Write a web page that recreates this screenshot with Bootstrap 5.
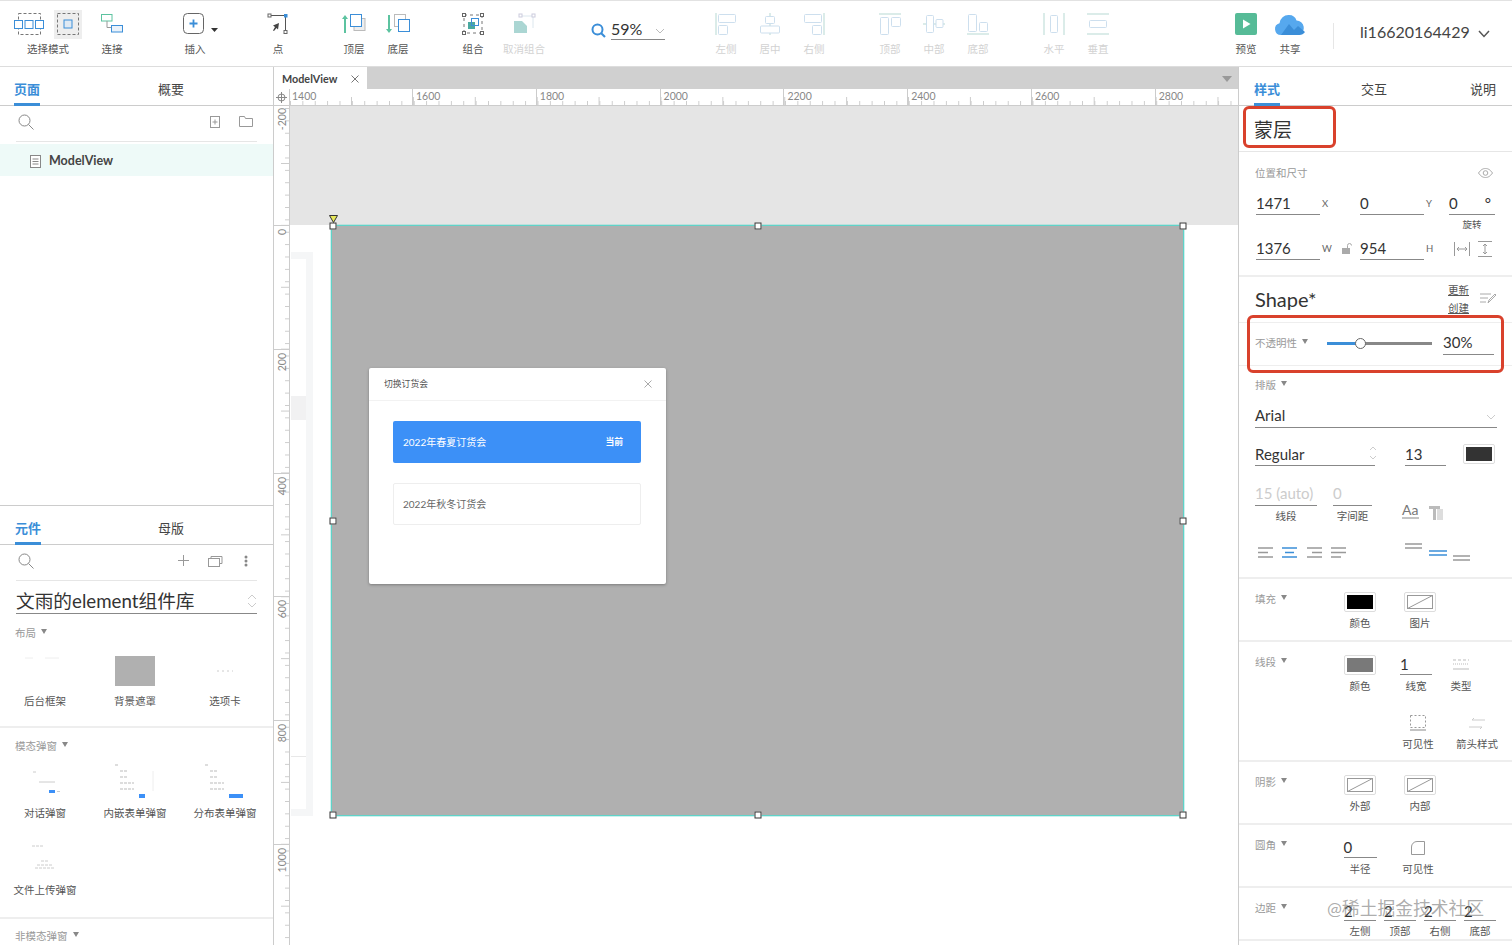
<!DOCTYPE html>
<html lang="zh-CN">
<head>
<meta charset="utf-8">
<title>Axure</title>
<link rel="stylesheet" href="https://cdn.jsdelivr.net/npm/bootstrap@5.3.0/dist/css/bootstrap.min.css">
<style>
html,body{height:945px;overflow:hidden}
body{font-family:"Lato","Noto Sans CJK SC",sans-serif;font-size:11px;color:#444;background:#fff}
svg{display:block;overflow:visible}
/* toolbar */
.topbar{height:67px;border-top:1px solid #e2e2e2;border-bottom:1px solid #ddd;padding-left:14px}
.tool{width:44px;height:65px;display:flex;flex-direction:column;align-items:center}
.tool-ic{height:30px;margin-top:8px;display:flex;align-items:center;justify-content:center}
.tool-tx{font-size:10.5px;line-height:14px;margin-top:3px;color:#555;white-space:nowrap}
.tool.off .tool-tx{color:#d2d2d2}
.tw68{width:68px}.tw58{width:58px}
.m8{margin-left:8px}.m39{margin-left:39px}.m32{margin-left:32px}.m31{margin-left:31px}.m37{margin-left:37px}.m38{margin-left:38px}.m104{margin-left:104px}
.selbox{width:29px;height:29px;background:#eee;margin-left:10px}
.zoombox{width:76px;height:30px;margin-top:14px}
.zoomfld{width:54px;border-bottom:1px solid #888;height:25px;font-size:16px;line-height:28px;color:#333;margin-left:4px;position:relative}
.zoomfld .chev{top:13px;right:0}
.vsep{width:1px;height:26px;background:#e6e6e6;margin:22px 0 0 21px}
.user{font-size:16px;color:#444;margin-left:26px;margin-top:19px;line-height:24px;height:24px}
/* panels */
.mainrow{height:878px}
.leftp{width:274px;border-right:1px solid #ccc;flex:none}
.rightp{width:274px;border-left:1px solid #ccc;flex:none;position:relative;overflow:hidden}
.tabsr{height:39px;border-bottom:1px solid #ccc;position:relative;font-size:13px;color:#444}
.tb{position:absolute;top:13px;line-height:18px}
.tb.on{color:#3b8ed8;font-weight:700}
.tb.on::after{content:"";position:absolute;left:0;right:0;top:23px;height:3px;background:#3b8ed8}
.t14{left:14px}.t158{left:158px}.t15{left:15px}.t158b{left:158px}
.r15{left:15px}.r122{left:122px}.r231{left:231px}
.ltop{height:439px;border-bottom:1px solid #ccc}
.srow{height:36px;margin:0 16px;border-bottom:1px solid #e6e6e6;padding:0 2px 4px}
.srch{margin-right:auto}
.gap-f{margin-left:19px}
.gap-d{margin-left:21px;margin-right:7px}
.folder{margin-left:19px;margin-right:2px}
.tree{height:32px;margin-top:2px;background:#eefaf8;padding:2px 0 0 30px;font-size:12.5px;font-weight:700;color:#444}
.libsel{height:33px;margin:0 16px;border-bottom:1px solid #888;font-size:18.7px;color:#333;white-space:nowrap;padding-top:8px}
.glabel{font-size:10.5px;color:#999;height:20px;line-height:20px;display:flex;align-items:center;gap:5px;white-space:nowrap}
.tri{width:0;height:0;border-left:3px solid transparent;border-right:3px solid transparent;border-top:5px solid #888;display:inline-block;margin-top:-3px}
.lsec{padding-left:15px}
.thgrid{display:grid;grid-template-columns:repeat(3,90px)}
.thc{display:flex;flex-direction:column;align-items:center}
.thp{height:32px;display:flex;align-items:center;justify-content:center}
.thp2{height:36px;display:flex;align-items:center;justify-content:center}
.thl{font-size:10.5px;line-height:16px;margin-top:6px;color:#555;white-space:nowrap}
.veil{width:40px;height:30px;background:#b0b0b0}
.sec1{height:114px;border-bottom:2px solid #eee;padding-top:9px}
.sec2{height:191px;border-bottom:2px solid #eee;padding-top:8px}
.thg1{margin-top:12px}
.thg2{margin-top:7px}
.thg3{margin-top:19px}
.lsecl{padding-top:7px}
/* centre */
.center{min-width:0;flex:1 1 auto}
.tabbar{height:22px;background:#d0d0d0;position:relative}
.dtab{width:93px;height:22px;background:#fff;font-size:10.8px;font-weight:700;color:#444;padding:1px 0 0 8px;line-height:22px;display:flex;align-items:center;gap:14px}
.darrow{position:absolute;right:6px;top:9px;border-left:5px solid transparent;border-right:5px solid transparent;border-top:6px solid #999}
.hruler{height:17px;border-bottom:1px solid #ccc;background-color:#fff;
 background-image:linear-gradient(90deg,#ccc 1px,transparent 1px),linear-gradient(90deg,#ccc 1px,transparent 1px);
 background-size:12.38px 4px,61.9px 8px;background-repeat:repeat-x;
 background-position:0 100%,61px 100%}
.rcorner{width:16px;flex:none;background:#fff;display:flex;align-items:center;justify-content:center;border-right:1px solid #ccc;border-bottom:1px solid #ccc;height:17px}
.rcell{width:123.8px;flex:none;font-size:10.5px;color:#888;padding-left:3px;line-height:15px;border-left:1px solid #ccc;height:16px}
.rcell0{width:122px;flex:none;font-size:10.5px;color:#888;padding-left:2px;line-height:15px;height:16px}
.work{height:839px}
.vruler{width:16px;flex:none;border-right:1px solid #ccc;background-color:#fff;
 background-image:linear-gradient(#ccc 1px,transparent 1px),linear-gradient(#ccc 1px,transparent 1px);
 background-size:4px 12.38px,8px 61.9px;background-repeat:repeat-y;background-position:100% 2px,100% 57px;overflow:hidden}
.vcell{height:123.8px;border-top:1px solid #ccc;padding-top:3px;font-size:10.5px;color:#888;line-height:12px}
.vcell0{height:119px;padding-top:2px;font-size:10.5px;color:#888;line-height:12px}
.vtx{writing-mode:vertical-rl;transform:rotate(180deg);display:block;height:max-content;margin-left:2px}
.canvas{position:relative;overflow:hidden;background:#fff}
.band{position:absolute;left:0;right:0;top:0;height:119px;background:#e5e5e5}
.gh1{position:absolute;left:1px;top:146px;width:22px;height:564px;border:solid #f5f6f7;border-width:7px 7px 7px 0}
.gh2{position:absolute;left:1px;top:290px;width:15px;height:24px;background:#f1f1f2}
.gh3{position:absolute;left:1px;top:650px;width:15px;height:1px;background:#e8e8e8}
.mask{position:absolute;left:41px;top:119px;width:853px;height:591px;background:#b0b0b0;border:1px solid #5fd3c9;box-shadow:0 0 0 1px rgba(111,214,204,.35)}
.hd{position:absolute;width:7px;height:7px;background:#fff;border:1px solid #333;transform:translate(-50%,-50%)}
.hl{left:1px}.hc{left:50%}.hr{left:100%}
.ht{top:0}.hm{top:50%}.hb{top:100%}
.ytri{position:absolute;left:-3px;top:-11px}
.dlg{position:absolute;left:37px;top:142px;width:297px;height:216px;background:#fff;border-radius:2px;box-shadow:0 1px 3px rgba(0,0,0,.3)}
.dlghead{height:33px;padding:0 14px 0 15px;border-bottom:1px solid #f2f2f2;font-size:8.8px;color:#555}
.dlgbody{padding:20px 25px 0 24px}
.opt{height:42px;border-radius:2px;padding:0 18px 0 10px;font-size:10px}
.opton{background:#3c90f7;color:#fff;margin-bottom:20px}
.tagcur{font-size:8.8px;font-weight:700}
.optoff{border:1px solid #eee;color:#666;padding-left:9px}
/* right */
.rtabs{height:39px}
.namesec{height:46px;border-bottom:1px solid #e6e6e6;padding-left:15px;font-size:19px;line-height:47px;color:#333}
.geo{height:125px;border-bottom:2px solid #eee;padding:11px 0 0 16px}
.geoh{height:20px;width:238px;font-size:10.5px;color:#999;line-height:20px}
.geog{display:grid;grid-template-columns:64px 40px 64px 25px 46px;margin:9px 0 0 1px;row-gap:0}
.fld{height:23px;border-bottom:1px solid #888;font-size:15px;line-height:21px;color:#333;position:relative;white-space:nowrap}
.geog .fld,.rowa .fld{line-height:23px}
.unit{font-size:9.5px;color:#666;padding-left:2px;line-height:24px;display:flex;align-items:center;gap:10px;height:23px}
.rotl{grid-column:5;height:22px;font-size:9.5px;text-align:center;color:#555;line-height:19px}
.geoic{display:flex;gap:7px;align-items:center;height:23px;margin-left:5px}
.shapesec{height:46px;border-bottom:1px solid #eee;padding-left:16px;position:relative}
.shapen{font-size:20px;color:#333;line-height:44px}
.upd{right:43px;font-size:10.5px;line-height:18px;color:#555;text-decoration:underline;margin-top:4px;white-space:nowrap}
.opsec{height:43px;border-bottom:1px solid #eee;padding:0 0 2px 16px}
.oplbl{width:72px}
.slid{width:105px;height:3px;background:#888;position:relative}
.slidf{height:3px;background:#3b8ed8}
.knob{position:absolute;left:28px;top:-4px;width:11px;height:11px;border-radius:50%;background:#fff;border:1.5px solid #666}
.opv{width:51px;margin-left:11px}
.typesec{height:213px;border-bottom:2px solid #eee;padding:9px 0 0 16px}
.w242{width:242px;margin-top:10px}
.chev{position:absolute;right:1px;top:9px}
.chev2{position:absolute;right:-2px;top:3px}
.rowa{margin-top:15px;display:flex}
.rowb{margin-top:17px;display:flex}
.w120{width:120px}.w41{width:41px;margin-left:30px}
.swbig{width:32px;height:20px;margin-left:17px;margin-top:1px;border:1px solid #ddd;border-radius:2px;padding:2px;background:#fff}
.swin{width:100%;height:100%}
.c333{background:#333}.c000{background:#000}.c797{background:#797979}
.ghost{color:#ccc}
.w62{width:62px}.w39{width:39px;margin-left:16px}
.ucl{font-size:10.5px;color:#555;text-align:center;line-height:16px;margin-top:2px}
.typeic{margin-left:30px;margin-top:21px}
.alignr{margin-top:18px;margin-left:3px}
.psec{display:flex;padding-left:16px;border-bottom:2px solid #eee}
.plbl{width:89px;flex:none;margin-top:10px}
.cell{width:32px;flex:none;display:flex;flex-direction:column;align-items:center}
.cw{margin-top:13px}
.swt{width:32px;height:20px;border:1px solid #ddd;border-radius:2px;padding:2px;background:#fff}
.cl{font-size:10.5px;line-height:16px;margin-top:3px;color:#555;white-space:nowrap}
.g28{margin-left:28px}.g26{margin-left:26px}.g24{margin-left:24px}.g13{margin-left:13px}
.fs63{height:63px}
.fs120{height:120px;display:block;padding-left:16px}
.strow{display:flex}
.strow2{display:flex;margin:19px 0 0 143px}
.icb{height:20px;display:flex;align-items:center;justify-content:center}
.cell40{width:40px;flex:none;display:flex;flex-direction:column;align-items:center}
.cell50{width:50px;flex:none;display:flex;flex-direction:column;align-items:center;margin-left:14px}
.cf{width:32px;margin-top:-3px;line-height:25px}
.cft{width:33px;margin-top:-3px;line-height:25px}
.pad4{display:flex;gap:8px}
.pc{width:32px;flex:none;display:flex;flex-direction:column;align-items:center}
.pc .fld{width:100%;margin-top:-3px;line-height:26px}
.pc .cl{margin-top:2px}
.redbox{position:absolute;border:3px solid #d9412c;border-radius:6px;pointer-events:none}
.rb1{left:4px;top:39px;width:93px;height:42px}
.rb2{left:8px;top:248px;width:257px;height:58px}
.wmark{position:absolute;left:88px;top:829px;font-size:17.8px;color:rgba(120,120,120,.62);white-space:nowrap;line-height:24px}
.nowrap{white-space:nowrap}
</style>
</head>
<body>
<!-- toolbar -->
<div class="topbar d-flex">
  <div class="tool tw68">
    <div class="tool-ic w-100 justify-content-start">
      <svg width="30" height="24" viewBox="0 0 30 24" fill="none"><rect x="4.5" y="1.5" width="22" height="21" stroke="#777" stroke-dasharray="3 2"/><g stroke="#3b8ed8" fill="#fff"><rect x=".5" y="8.5" width="8" height="8"/><rect x="11" y="8.5" width="8" height="8"/><rect x="21.5" y="8.5" width="8" height="8"/></g></svg>
      <div class="selbox d-flex align-items-center justify-content-center"><svg width="22" height="22" viewBox="0 0 22 22" fill="none"><rect x=".5" y=".5" width="21" height="21" stroke="#777" stroke-dasharray="3 2"/><rect x="7" y="7" width="8" height="8" stroke="#3b8ed8" fill="#dfe9f3"/></svg></div>
    </div>
    <div class="tool-tx">选择模式</div>
  </div>
  <div class="tool m8">
    <div class="tool-ic"><svg width="22" height="22" viewBox="0 0 22 22" fill="none"><rect x=".5" y="1.5" width="10.5" height="6.5" stroke="#5cc3a0"/><path d="M6 8v6.5h5" stroke="#999"/><rect x="10.5" y="12.5" width="11" height="6.5" stroke="#3b8ed8" fill="#eaf2fa"/></svg></div>
    <div class="tool-tx">连接</div>
  </div>
  <div class="tool m39 position-relative">
    <div class="tool-ic"><svg width="44" height="22" viewBox="0 0 44 22" fill="none"><rect x="10.5" y=".5" width="20" height="20" rx="4" stroke="#666"/><path d="M20.500 6.500v8M16.500 10.500h8" stroke="#3b8ed8" stroke-width="1.800"/><path d="M38 15h7l-3.500 4z" fill="#333"/></svg></div>
    <div class="tool-tx">插入</div>
  </div>
  <div class="tool m39">
    <div class="tool-ic"><svg width="22" height="22" viewBox="0 0 22 22" fill="none"><path d="M3 2.500h15.500V18" stroke="#555"/><rect x="1" y="1" width="3" height="3" fill="#fff" stroke="#666"/><rect x="17" y="1" width="3.500" height="3.500" fill="#3b8ed8"/><rect x="17" y="17.500" width="3" height="3" fill="#fff" stroke="#666"/><path d="M12 10l-6 2.500 2 1.500-2 3.500 1 .5 2.500-3 1.500 1.500z" fill="#444"/></svg></div>
    <div class="tool-tx">点</div>
  </div>
  <div class="tool m32">
    <div class="tool-ic"><svg width="24" height="22" viewBox="0 0 24 22" fill="none"><path d="M3 20V4" stroke="#5cc3a0" stroke-width="2"/><path d="M0 6l3-4 3 4z" fill="#5cc3a0"/><rect x="12" y="5.500" width="11" height="12" stroke="#bbb" fill="#eee"/><rect x="8.500" y="1.500" width="11" height="12" stroke="#3b8ed8" fill="#fff"/></svg></div>
    <div class="tool-tx">顶层</div>
  </div>
  <div class="tool">
    <div class="tool-ic"><svg width="24" height="22" viewBox="0 0 24 22" fill="none"><path d="M3 2v16" stroke="#5cc3a0" stroke-width="2"/><path d="M0 16l3 4 3-4z" fill="#5cc3a0"/><rect x="8.500" y="1.500" width="11" height="12" stroke="#bbb" fill="#fff"/><rect x="12.500" y="6.500" width="11" height="12" stroke="#3b8ed8" fill="#fff"/></svg></div>
    <div class="tool-tx">底层</div>
  </div>
  <div class="tool m31">
    <div class="tool-ic"><svg width="22" height="22" viewBox="0 0 22 22" fill="none"><rect x="2" y="2" width="18" height="18" stroke="#777" stroke-dasharray="3 3"/><g fill="#fff" stroke="#666"><rect x=".5" y=".5" width="3" height="3"/><rect x="18.500" y=".5" width="3" height="3"/><rect x=".5" y="18.500" width="3" height="3"/><rect x="18.500" y="18.500" width="3" height="3"/></g><rect x="6" y="9" width="7" height="7" fill="#4aa9a0"/><rect x="9.500" y="5.500" width="7" height="7" stroke="#3b8ed8"/></svg></div>
    <div class="tool-tx">组合</div>
  </div>
  <div class="tool tw58 off">
    <div class="tool-ic"><svg width="22" height="22" viewBox="0 0 22 22" fill="none"><path d="M8 3h12v12" stroke="#dce7ee"/><rect x="19" y="1" width="3" height="3" fill="#fff" stroke="#ccd"/><rect x="6" y="1" width="3" height="3" fill="#fff" stroke="#ccd"/><path d="M1 8h8l5 5v7H1z" fill="#abd6d3"/></svg></div>
    <div class="tool-tx">取消组合</div>
  </div>
  <div class="zoombox m38 d-flex">
    <svg class="mt-2" width="16" height="16" viewBox="0 0 16 16" fill="none"><circle cx="6.500" cy="6.500" r="5" stroke="#3b8ed8" stroke-width="2"/><path d="M10 10l4 4" stroke="#3b8ed8" stroke-width="2.200"/></svg>
    <div class="zoomfld">59%<svg class="chev" width="10" height="6" viewBox="0 0 10 6" fill="none"><path d="M1 1l4 4 4-4" stroke="#bbb"/></svg></div>
  </div>
  <div class="tool off m37">
    <div class="tool-ic"><svg width="22" height="22" viewBox="0 0 22 22" fill="none"><path d="M1 0v22" stroke="#cfe6e2" stroke-width="1.500"/><rect x="3.500" y="1.500" width="17" height="8" rx="1" stroke="#cddfee"/><rect x="3.500" y="12.500" width="9" height="9" rx="1" stroke="#cddfee"/></svg></div>
    <div class="tool-tx">左侧</div>
  </div>
  <div class="tool off">
    <div class="tool-ic"><svg width="22" height="22" viewBox="0 0 22 22" fill="none"><path d="M11 0v22" stroke="#cfe6e2" stroke-width="1.500"/><rect x="6.500" y="3.500" width="9" height="7" rx="1" fill="#fff" stroke="#cddfee"/><rect x="1.500" y="13" width="19" height="7" rx="1" fill="#fff" stroke="#cddfee"/></svg></div>
    <div class="tool-tx">居中</div>
  </div>
  <div class="tool off">
    <div class="tool-ic"><svg width="22" height="22" viewBox="0 0 22 22" fill="none"><path d="M21 0v22" stroke="#cfe6e2" stroke-width="1.500"/><rect x="1.500" y="1.500" width="17" height="8" rx="1" stroke="#cddfee"/><rect x="9.500" y="12.500" width="9" height="9" rx="1" stroke="#cddfee"/></svg></div>
    <div class="tool-tx">右侧</div>
  </div>
  <div class="tool off m32">
    <div class="tool-ic"><svg width="22" height="22" viewBox="0 0 22 22" fill="none"><path d="M0 1h22" stroke="#cfe6e2" stroke-width="1.500"/><rect x="1.500" y="4.500" width="8" height="17" rx="1" stroke="#cddfee"/><rect x="12.500" y="4.500" width="9" height="9" rx="1" stroke="#cddfee"/></svg></div>
    <div class="tool-tx">顶部</div>
  </div>
  <div class="tool off">
    <div class="tool-ic"><svg width="22" height="22" viewBox="0 0 22 22" fill="none"><path d="M0 11h22" stroke="#cfe6e2" stroke-width="1.500"/><rect x="3.500" y="2.500" width="7" height="17" rx="1" fill="#fff" stroke="#cddfee"/><rect x="13" y="6.500" width="7" height="8" rx="1" fill="#fff" stroke="#cddfee"/></svg></div>
    <div class="tool-tx">中部</div>
  </div>
  <div class="tool off">
    <div class="tool-ic"><svg width="22" height="22" viewBox="0 0 22 22" fill="none"><path d="M0 21h22" stroke="#cfe6e2" stroke-width="1.500"/><rect x="1.500" y="1.500" width="8" height="17" rx="1" stroke="#cddfee"/><rect x="12.500" y="9.500" width="8" height="9" rx="1" stroke="#cddfee"/></svg></div>
    <div class="tool-tx">底部</div>
  </div>
  <div class="tool off m32">
    <div class="tool-ic"><svg width="22" height="22" viewBox="0 0 22 22" fill="none"><path d="M1 0v22M21 0v22" stroke="#cfe6e2" stroke-width="1.500"/><rect x="7.500" y="2.500" width="7" height="17" rx="1" stroke="#cddfee"/></svg></div>
    <div class="tool-tx">水平</div>
  </div>
  <div class="tool off">
    <div class="tool-ic"><svg width="22" height="22" viewBox="0 0 22 22" fill="none"><path d="M0 1h22M0 21h22" stroke="#cfe6e2" stroke-width="1.500"/><rect x="2.500" y="7.500" width="17" height="7" rx="1" stroke="#cddfee"/></svg></div>
    <div class="tool-tx">垂直</div>
  </div>
  <div class="tool m104">
    <div class="tool-ic"><svg width="22" height="22" viewBox="0 0 22 22"><rect width="22" height="22" rx="2" fill="#56bb97"/><path d="M8 6.500l7.500 4.500L8 15.500z" fill="#fff"/></svg></div>
    <div class="tool-tx">预览</div>
  </div>
  <div class="tool">
    <div class="tool-ic"><svg width="32" height="21" viewBox="0 0 32 21"><path d="M7 21a6 6 0 0 1-1.500-11.800A9 9 0 0 1 15 1a8 8 0 0 1 7.500 5.500A7.500 7.500 0 0 1 25 21z" fill="#56a8ee"/><path d="M7 21l8-11 5 6 4-4 7 6a7 7 0 0 1-6 3z" fill="#3b8ed8"/></svg></div>
    <div class="tool-tx">共享</div>
  </div>
  <div class="vsep"></div>
  <div class="user d-flex align-items-center gap-2 nowrap">li16620164429<svg width="12" height="8" viewBox="0 0 12 8" fill="none" class="mt-1"><path d="M1 1l5 5.500L11 1" stroke="#555" stroke-width="1.500"/></svg></div>
</div>

<div class="mainrow d-flex">
  <!-- left -->
  <div class="leftp">
    <div class="ltop">
      <div class="tabsr"><span class="tb on t14">页面</span><span class="tb t158">概要</span></div>
      <div class="srow d-flex align-items-center">
        <svg class="srch" width="16" height="16" viewBox="0 0 16 16" fill="none"><circle cx="6.500" cy="6.500" r="5.500" stroke="#888"/><path d="M10.500 10.500l5 5" stroke="#888"/></svg>
        <svg width="10" height="12" viewBox="0 0 10 12" fill="none"><rect x=".5" y=".5" width="9" height="11" stroke="#999"/><path d="M5 3.500v5M2.500 6h5" stroke="#999"/></svg>
        <svg class="folder" width="14" height="11" viewBox="0 0 14 11" fill="none"><path d="M.5.500h5l1 2h7v8H.5z" stroke="#999"/></svg>
      </div>
      <div class="tree d-flex align-items-center gap-2"><svg width="11" height="13" viewBox="0 0 11 13" fill="none"><rect x=".5" y=".5" width="10" height="12" stroke="#888" fill="#fff"/><path d="M2.500 4h6M2.500 6.500h6M2.500 9h6" stroke="#888"/></svg>ModelView</div>
    </div>
    <div class="tabsr"><span class="tb on t15">元件</span><span class="tb t158b">母版</span></div>
    <div class="srow d-flex align-items-center">
      <svg class="srch" width="16" height="16" viewBox="0 0 16 16" fill="none"><circle cx="6.500" cy="6.500" r="5.500" stroke="#888"/><path d="M10.500 10.500l5 5" stroke="#888"/></svg>
      <svg width="11" height="11" viewBox="0 0 11 11" fill="none"><path d="M5.500 0v11M0 5.500h11" stroke="#999"/></svg>
      <svg class="gap-f" width="15" height="12" viewBox="0 0 15 12" fill="none"><rect x=".5" y="3.500" width="11" height="8" stroke="#999" fill="#fff"/><path d="M3 3.500V1.500h11v7h-2.500" stroke="#999"/></svg>
      <svg class="gap-d" width="4" height="12" viewBox="0 0 4 12"><circle cx="2" cy="2" r="1.500" fill="#888"/><circle cx="2" cy="6" r="1.500" fill="#888"/><circle cx="2" cy="10" r="1.500" fill="#888"/></svg>
    </div>
    <div class="libsel d-flex align-items-center justify-content-between">文雨的element组件库<svg width="10" height="14" viewBox="0 0 10 14" fill="none"><path d="M1 5l4-4 4 4M1 9l4 4 4-4" stroke="#ccc"/></svg></div>
    <div class="sec1">
      <div class="lsec"><div class="glabel">布局<span class="tri"></span></div></div>
      <div class="thgrid thg1">
        <div class="thc"><div class="thp"><svg width="40" height="30" viewBox="0 0 40 30"><path d="M0 2h8M20 2h14" stroke="#eee"/></svg></div><div class="thl">后台框架</div></div>
        <div class="thc"><div class="thp"><div class="veil"></div></div><div class="thl">背景遮罩</div></div>
        <div class="thc"><div class="thp"><svg width="40" height="6" viewBox="0 0 40 6"><path d="M12 3h16" stroke="#ccc" stroke-dasharray="2 3"/></svg></div><div class="thl">选项卡</div></div>
      </div>
    </div>
    <div class="sec2">
      <div class="lsec"><div class="glabel">模态弹窗<span class="tri"></span></div></div>
      <div class="thgrid thg2">
        <div class="thc"><div class="thp2"><svg width="40" height="36" viewBox="0 0 40 36"><path d="M8 9h3M14 19h16" stroke="#ccc"/><rect x="24" y="27" width="6" height="3" fill="#3c90f7"/><path d="M32 28.500h3" stroke="#ccc"/></svg></div><div class="thl">对话弹窗</div></div>
        <div class="thc"><div class="thp2"><svg width="40" height="36" viewBox="0 0 40 36"><path d="M0 2h3M5 8h8M5 14h8M5 20h14M5 26h14" stroke="#bbb" stroke-dasharray="3 1"/><path d="M38 8v20" stroke="#eee"/><rect x="24" y="31" width="6" height="4" fill="#3c90f7"/></svg></div><div class="thl">内嵌表单弹窗</div></div>
        <div class="thc"><div class="thp2"><svg width="40" height="36" viewBox="0 0 40 36"><path d="M0 2h3M5 8h8M5 14h8M5 20h14M5 26h14" stroke="#bbb" stroke-dasharray="3 1"/><rect x="24" y="31" width="14" height="4" fill="#3c90f7"/></svg></div><div class="thl">分布表单弹窗</div></div>
      </div>
      <div class="thgrid thg3">
        <div class="thc"><div class="thp2"><svg width="40" height="30" viewBox="0 0 40 30"><path d="M7 3h12M16 18h8M12 22h16M10 25h20" stroke="#ccc" stroke-dasharray="3 1"/></svg></div><div class="thl">文件上传弹窗</div></div>
      </div>
    </div>
    <div class="lsec lsecl"><div class="glabel">非模态弹窗<span class="tri"></span></div></div>
  </div>

  <!-- centre -->
  <div class="center">
    <div class="tabbar"><div class="dtab">ModelView<svg width="8" height="8" viewBox="0 0 8 8" fill="none"><path d="M.5.500l7 7M7.500.500l-7 7" stroke="#777"/></svg></div><span class="darrow"></span></div>
    <div class="d-flex">
      <div class="rcorner"><svg width="11" height="11" viewBox="0 0 11 11" fill="none"><circle cx="5.500" cy="5.500" r="3.500" stroke="#888"/><path d="M5.500 0v11M0 5.500h11" stroke="#888"/></svg></div>
      <div class="hruler d-flex flex-grow-1 overflow-hidden">
        <div class="rcell0">1400</div><div class="rcell">1600</div><div class="rcell">1800</div><div class="rcell">2000</div><div class="rcell">2200</div><div class="rcell">2400</div><div class="rcell">2600</div><div class="rcell">2800</div>
      </div>
    </div>
    <div class="work d-flex">
      <div class="vruler">
        <div class="vcell0"><span class="vtx">-200</span></div>
        <div class="vcell"><span class="vtx">0</span></div>
        <div class="vcell"><span class="vtx">200</span></div>
        <div class="vcell"><span class="vtx">400</span></div>
        <div class="vcell"><span class="vtx">600</span></div>
        <div class="vcell"><span class="vtx">800</span></div>
        <div class="vcell"><span class="vtx">1000</span></div>
      </div>
      <div class="canvas flex-grow-1">
        <div class="band"></div>
        <div class="gh1"></div><div class="gh2"></div><div class="gh3"></div>
        <div class="mask">
          <span class="hd hl ht"></span><span class="hd hc ht"></span><span class="hd hr ht"></span>
          <span class="hd hl hm"></span><span class="hd hr hm"></span>
          <span class="hd hl hb"></span><span class="hd hc hb"></span><span class="hd hr hb"></span>
          <svg class="ytri" width="9" height="8" viewBox="0 0 9 8"><path d="M.5.500h8L4.500 7.500z" fill="#e8e85a" stroke="#333"/></svg>
          <div class="dlg">
            <div class="dlghead d-flex align-items-center justify-content-between">切换订货会<svg width="8" height="8" viewBox="0 0 8 8" fill="none"><path d="M.5.500l7 7M7.500.500l-7 7" stroke="#aaa"/></svg></div>
            <div class="dlgbody">
              <div class="opt opton d-flex align-items-center justify-content-between"><span>2022年春夏订货会</span><span class="tagcur">当前</span></div>
              <div class="opt optoff d-flex align-items-center">2022年秋冬订货会</div>
            </div>
          </div>
        </div>
      </div>
    </div>
  </div>

  <!-- right -->
  <div class="rightp">
    <div class="tabsr rtabs"><span class="tb on r15">样式</span><span class="tb r122">交互</span><span class="tb r231">说明</span></div>
    <div class="namesec">蒙层</div>
    <div class="geo">
      <div class="geoh d-flex justify-content-between align-items-center">位置和尺寸<svg width="15" height="10" viewBox="0 0 15 10" fill="none"><path d="M.5 5C3 1.500 5 .5 7.500.5S12 1.500 14.500 5C12 8.500 10 9.500 7.500 9.500S3 8.500.5 5z" stroke="#aaa"/><circle cx="7.500" cy="5" r="2.300" stroke="#aaa"/></svg></div>
      <div class="geog">
        <div class="fld">1471</div><div class="unit">X</div><div class="fld">0</div><div class="unit">Y</div><div class="fld d-flex justify-content-between">0<span class="pe-1">°</span></div>
        <div class="rotl">旋转</div>
        <div class="fld">1376</div>
        <div class="unit">W<svg width="10" height="11" viewBox="0 0 10 11"><rect y="5" width="8" height="6" fill="#aaa"/><path d="M5.500 5V2.500a2 2 0 0 1 4 0" fill="none" stroke="#aaa"/></svg></div>
        <div class="fld">954</div><div class="unit">H</div>
        <div class="geoic"><svg width="16" height="16" viewBox="0 0 16 16" fill="none"><path d="M.5 1v14M15.500 1v14M3 8h10M3 8l2-2M3 8l2 2M13 8l-2-2M13 8l-2 2" stroke="#999"/></svg><svg width="16" height="16" viewBox="0 0 16 16" fill="none"><path d="M1 .5h14M1 15.500h14M8 3v10M8 3L6 5M8 3l2 2M8 13l-2-2M8 13l2-2" stroke="#999"/></svg></div>
      </div>
    </div>
    <div class="shapesec d-flex">
      <div class="shapen">Shape*</div>
      <div class="upd position-absolute"><div>更新</div><div>创建</div></div>
      <svg class="position-absolute end-0 me-3 mt-3" width="16" height="12" viewBox="0 0 16 12" fill="none"><path d="M0 1h11M0 5h8M0 9h6" stroke="#aaa"/><path d="M8 10l1-3 6-6 1 1-6 6z" stroke="#aaa"/></svg>
    </div>
    <div class="opsec d-flex align-items-center">
      <div class="glabel oplbl">不透明性<span class="tri"></span></div>
      <div class="slid"><div class="slidf" style="width:33%"></div><span class="knob"></span></div>
      <div class="fld opv">30%</div>
    </div>
    <div class="typesec">
      <div class="glabel">排版<span class="tri"></span></div>
      <div class="fld w242">Arial<svg class="chev" width="10" height="6" viewBox="0 0 10 6" fill="none"><path d="M1 1l4 4 4-4" stroke="#ccc"/></svg></div>
      <div class="rowa">
        <div class="fld w120">Regular<svg class="chev2" width="8" height="14" viewBox="0 0 8 14" fill="none"><path d="M1 4l3-3 3 3M1 10l3 3 3-3" stroke="#ccc"/></svg></div>
        <div class="fld w41">13</div>
        <div class="swbig"><div class="swin c333"></div></div>
      </div>
      <div class="rowb">
        <div class="w62"><div class="fld ghost">15 (auto)</div><div class="ucl">线段</div></div>
        <div class="w39"><div class="fld ghost">0</div><div class="ucl">字间距</div></div>
        <svg class="typeic" width="42" height="16" viewBox="0 0 42 16" fill="none"><text x="0" y="11" font-size="14" font-family="Lato,sans-serif" fill="#777">Aa</text><path d="M0 14h17" stroke="#888"/><path d="M27 2h11v3h-4v11h-3V5h-4z" fill="#bbb"/><path d="M35 5h6v11h-6z" fill="#ddd"/></svg>
      </div>
      <svg class="alignr" width="214" height="22" viewBox="0 0 214 22" fill="none" stroke-width="1.500"><g stroke="#999"><path d="M0 6h15M0 10.500h10M0 15h15"/><path d="M49 6h15M54 10.500h10M49 15h15"/><path d="M73 6h15M73 10.500h15M73 15h10"/></g><path d="M24 6h15M27 10.500h9M24 15h15" stroke="#3b8ed8"/><path d="M147 2h17M147 6h17" stroke="#999"/><path d="M171 9h18M171 13h18" stroke="#3b8ed8"/><path d="M195 14h17M195 18h17" stroke="#999"/></svg>
    </div>
    <div class="psec fs63">
      <div class="glabel plbl">填充<span class="tri"></span></div>
      <div class="cell cw"><div class="swt"><div class="swin c000"></div></div><div class="cl">颜色</div></div>
      <div class="cell cw g28"><div class="swt"><svg width="26" height="14" viewBox="0 0 26 14" fill="none"><rect x=".5" y=".5" width="25" height="13" stroke="#999"/><path d="M.5 13.500l25-13" stroke="#999"/></svg></div><div class="cl">图片</div></div>
    </div>
    <div class="psec fs120">
      <div class="strow">
        <div class="glabel plbl">线段<span class="tri"></span></div>
        <div class="cell cw"><div class="swt"><div class="swin c797"></div></div><div class="cl">颜色</div></div>
        <div class="cell cw g24"><div class="fld cf">1</div><div class="cl">线宽</div></div>
        <div class="cell cw g13"><div class="icb"><svg width="18" height="12" viewBox="0 0 18 12" fill="none"><path d="M1 1h16" stroke="#bbb" stroke-dasharray="3 2"/><path d="M1 5h16" stroke="#bbb" stroke-dasharray="1 1"/><path d="M1 10h16" stroke="#bbb"/></svg></div><div class="cl">类型</div></div>
      </div>
      <div class="strow2">
        <div class="cell40"><div class="icb"><svg width="16" height="16" viewBox="0 0 16 16" fill="none"><rect x=".5" y=".5" width="15" height="12" stroke="#999" stroke-dasharray="2 2"/><path d="M0 15h16" stroke="#888"/></svg></div><div class="cl">可见性</div></div>
        <div class="cell50"><div class="icb"><svg width="16" height="13" viewBox="0 0 16 13" fill="none"><path d="M3 3h13M3 3l2-2M13 10H0M13 10l-2 2" stroke="#ccc"/></svg></div><div class="cl">箭头样式</div></div>
      </div>
    </div>
    <div class="psec fs63">
      <div class="glabel plbl">阴影<span class="tri"></span></div>
      <div class="cell cw"><div class="swt"><svg width="26" height="14" viewBox="0 0 26 14" fill="none"><rect x=".5" y=".5" width="25" height="13" stroke="#999"/><path d="M.5 13.500l25-13" stroke="#999"/></svg></div><div class="cl">外部</div></div>
      <div class="cell cw g28"><div class="swt"><svg width="26" height="14" viewBox="0 0 26 14" fill="none"><rect x=".5" y=".5" width="25" height="13" stroke="#999"/><path d="M.5 13.500l25-13" stroke="#999"/></svg></div><div class="cl">内部</div></div>
    </div>
    <div class="psec fs63">
      <div class="glabel plbl">圆角<span class="tri"></span></div>
      <div class="cell cw"><div class="fld cft">0</div><div class="cl">半径</div></div>
      <div class="cell cw g26"><div class="icb"><svg width="14" height="14" viewBox="0 0 14 14" fill="none"><path d="M.5 13.500V6A5.500 5.500 0 0 1 6 .5h7.500v13z" stroke="#999"/></svg></div><div class="cl">可见性</div></div>
    </div>
    <div class="psec">
      <div class="glabel plbl">边距<span class="tri"></span></div>
      <div class="pad4 cw">
        <div class="pc"><div class="fld">2</div><div class="cl">左侧</div></div>
        <div class="pc"><div class="fld">2</div><div class="cl">顶部</div></div>
        <div class="pc"><div class="fld">2</div><div class="cl">右侧</div></div>
        <div class="pc"><div class="fld">2</div><div class="cl">底部</div></div>
      </div>
    </div>
    <div class="redbox rb1"></div>
    <div class="redbox rb2"></div>
    <div class="wmark">@稀土掘金技术社区</div>
  </div>
</div>
<script src="https://cdn.jsdelivr.net/npm/bootstrap@5.3.0/dist/js/bootstrap.bundle.min.js"></script>
</body>
</html>
